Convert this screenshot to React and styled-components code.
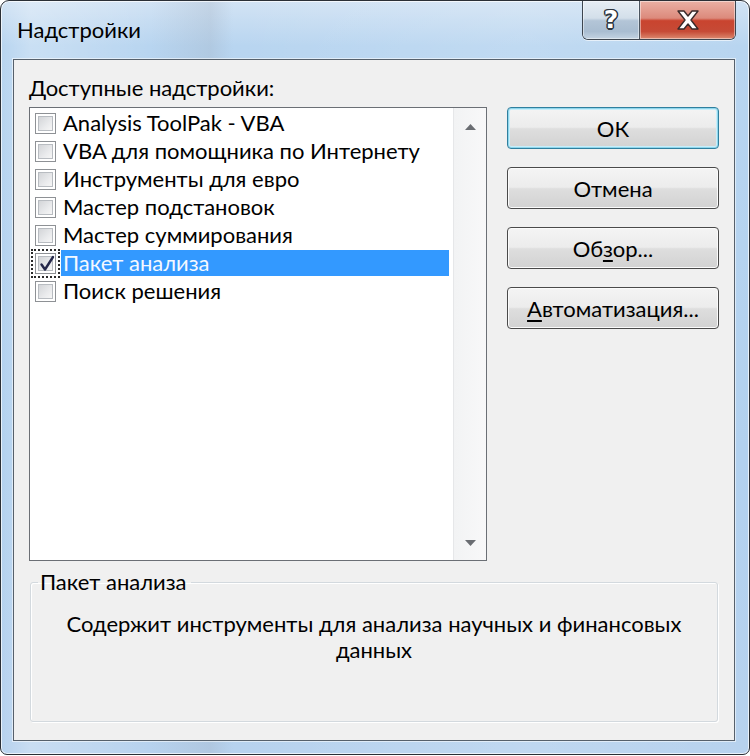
import React from "react";
import styled, { createGlobalStyle } from "styled-components";

const GlobalStyle = createGlobalStyle`
  html, body {
    margin: 0;
    padding: 0;
    background: #ffffff;
  }
  body {
    font-family: Lato, "Noto Sans", "Liberation Sans", sans-serif;
  }
`;

const addins = [
  { name: "Analysis ToolPak - VBA" },
  { name: "VBA для помощника по Интернету" },
  { name: "Инструменты для евро" },
  { name: "Мастер подстановок" },
  { name: "Мастер суммирования" },
  { name: "Пакет анализа", checked: true, selected: true },
  { name: "Поиск решения" },
];

const Window = styled.div`
  width: 750px;
  height: 755px;
  box-sizing: border-box;
  display: flex;
  flex-direction: column;
  padding: 0 14px 13px 12px;
  border: 1px solid #2a2f36;
  border-radius: 9px 9px 7px 7px;
  background: linear-gradient(
      90deg,
      rgba(255, 255, 255, 0) 0%,
      rgba(255, 255, 255, 0.25) 4%,
      rgba(255, 255, 255, 0) 20%,
      rgba(150, 160, 175, 0.22) 28%,
      rgba(255, 255, 255, 0) 31%,
      rgba(255, 255, 255, 0.12) 70%,
      rgba(255, 255, 255, 0) 100%
    ),
    linear-gradient(180deg, #d2e3f4 0%, #b8d5f0 6%, #b2d1ef 60%, #b7d2ee 100%);
  box-shadow: inset 0 0 0 1px rgba(255, 255, 255, 0.7);
`;

const TitleBar = styled.div`
  flex: none;
  height: 58px;
  display: flex;
  justify-content: space-between;
  align-items: flex-start;
`;

const Title = styled.div`
  padding: 16px 0 0 4px;
  font-size: 22px;
  line-height: 26px;
  color: #000;
`;

const CaptionGroup = styled.div`
  display: flex;
  height: 38px;
  margin-right: -1px;
  border: 1px solid #3e4650;
  border-top: none;
  border-radius: 0 0 6px 6px;
  overflow: hidden;
  box-shadow: 0 1px 0 rgba(255, 255, 255, 0.6);
`;

const CaptionButton = styled.div`
  width: ${(p) => p.$w}px;
  display: flex;
  align-items: center;
  justify-content: center;
  box-shadow: inset 0 0 0 1px rgba(255, 255, 255, 0.45);
  background: ${(p) =>
    p.$close
      ? "linear-gradient(180deg, #eab0a4 0%, #dc8a7c 45%, #c9442f 52%, #c64a36 80%, #dc8a70 100%)"
      : "linear-gradient(180deg, #e6edf4 0%, #d3dfea 45%, #b3c5d7 52%, #a9bdd1 80%, #c3d3e2 100%)"};
  & + & {
    border-left: 1px solid #4b5560;
  }
`;

const HelpGlyph = styled.span`
  font-family: "DejaVu Sans", sans-serif;
  font-weight: bold;
  font-size: 25px;
  line-height: 1;
  color: #ffffff;
  margin-top: -1px;
  text-shadow: -1.5px 0 0 #2d3640, 1.5px 0 0 #2d3640, 0 -1.5px 0 #2d3640,
    0 1.5px 0 #2d3640, -1px -1px 0 #2d3640, 1px -1px 0 #2d3640,
    -1px 1px 0 #2d3640, 1px 1px 0 #2d3640;
`;

const Client = styled.div`
  flex: 1;
  display: flex;
  flex-direction: column;
  padding: 16px 15px 17px 15px;
  border: 1px solid #56606b;
  background: #f0f0f0;
  box-shadow: 0 0 0 1px rgba(255, 255, 255, 0.55);
`;

const TopArea = styled.div`
  display: grid;
  grid-template-columns: 458px 212px;
  grid-template-rows: 24px 454px;
  grid-template-areas:
    "label ."
    "list buttons";
  column-gap: 20px;
  row-gap: 7px;
`;

const FieldLabel = styled.div`
  grid-area: label;
  font-size: 22px;
  line-height: 24px;
  color: #000;
  white-space: nowrap;
`;

const Accel = styled.u`
  text-decoration-thickness: 2px;
  text-underline-offset: 3px;
`;

const ListBox = styled.div`
  grid-area: list;
  display: flex;
  border: 1px solid #6b6f75;
  background: #ffffff;
`;

const Items = styled.div`
  flex: 1;
  padding: 1px 0 0 5px;
`;

const Row = styled.div`
  height: 28px;
  display: flex;
  align-items: center;
`;

const Box = styled.span`
  flex: none;
  width: 21px;
  height: 21px;
  box-sizing: border-box;
  border: 1px solid #8e9195;
  background: #ffffff;
  padding: 2px;
  position: relative;
  outline: ${(p) => (p.$focus ? "2px dotted #2a2a2a" : "none")};
  outline-offset: 2px;
  &::before {
    content: "";
    display: block;
    width: 100%;
    height: 100%;
    box-sizing: border-box;
    border: 1px solid #b8bcc1;
    background: linear-gradient(135deg, #d3d5d8 0%, #e9eaec 60%, #f6f6f6 100%);
  }
  svg {
    position: absolute;
    left: 1px;
    top: 0;
  }
`;

const ItemText = styled.span`
  flex: 1;
  margin: 0 4px 0 5px;
  padding-left: 2px;
  height: 26px;
  font-size: 22px;
  line-height: 26px;
  white-space: nowrap;
  color: ${(p) => (p.$selected ? "#f4f8ff" : "#000")};
  background: ${(p) => (p.$selected ? "#3399ff" : "transparent")};
`;

const ScrollBar = styled.div`
  flex: none;
  width: 33px;
  display: flex;
  flex-direction: column;
  justify-content: space-between;
  align-items: center;
  padding: 16px 0 14px;
  box-sizing: border-box;
  border-left: 1px solid #e6e7e9;
  background: linear-gradient(90deg, #f2f3f4 0%, #f8f8f9 100%);
`;

const Buttons = styled.div`
  grid-area: buttons;
  display: flex;
  flex-direction: column;
  gap: 18px;
`;

const Button = styled.button`
  height: 42px;
  width: 100%;
  box-sizing: border-box;
  border: 1px solid ${(p) => (p.$default ? "#2f7f9e" : "#4a4a4a")};
  border-radius: 4px;
  font-family: Lato, "Noto Sans", "Liberation Sans", sans-serif;
  font-size: 22px;
  color: #000;
  padding: 0;
  background: linear-gradient(
    180deg,
    #f4f4f4 0%,
    #ececec 48%,
    #dedede 52%,
    #d2d2d2 100%
  );
  box-shadow: ${(p) =>
    p.$default
      ? "inset 0 0 0 1px #8fd6ec, inset 0 0 0 2px #c8eefa"
      : "inset 0 0 0 1px #fbfbfb"};
`;

const GroupBox = styled.fieldset`
  flex: none;
  height: 152px;
  box-sizing: border-box;
  margin: 9px 1px 0 1px;
  padding: 17px 6px 0;
  border: 1px solid #d3d9de;
  border-radius: 3px;
  box-shadow: inset 1px 1px 0 #ffffff, 1px 1px 0 #ffffff;
`;

const Legend = styled.legend`
  margin-left: 1px;
  padding: 0 4px 0 2px;
  font-size: 22px;
  line-height: 24px;
  color: #000;
`;

const Description = styled.p`
  margin: 0;
  padding: 0 18px;
  font-size: 22px;
  line-height: 26px;
  text-align: center;
  color: #000;
`;

const Check = () => (
  <svg width="20" height="20" viewBox="0 0 20 20">
    <path
      d="M4.5 10.5 L8 15.5 L16 3"
      fill="none"
      stroke="#25284a"
      strokeWidth="2.4"
      strokeLinecap="round"
      strokeLinejoin="round"
    />
  </svg>
);

const Arrow = ({ down }) => (
  <svg width="11" height="6" viewBox="0 0 11 6">
    <path d={down ? "M0 0 H11 L5.5 6 Z" : "M0 6 H11 L5.5 0 Z"} fill="#6a6d72" />
  </svg>
);

const CloseGlyph = () => (
  <svg width="26" height="22" viewBox="0 0 26 22">
    <path
      d="M3 2 H9 L13 7 L17 2 H23 L16 11 L23 20 H17 L13 15 L9 20 H3 L10 11 Z"
      fill="#ffffff"
      stroke="#3a2a2a"
      strokeWidth="1.4"
      strokeLinejoin="round"
    />
  </svg>
);

const App = () => {
  return (
    <>
      <GlobalStyle />
      <Window>
        <TitleBar>
          <Title>Надстройки</Title>
          <CaptionGroup>
            <CaptionButton $w={56}>
              <HelpGlyph>?</HelpGlyph>
            </CaptionButton>
            <CaptionButton $w={95} $close>
              <CloseGlyph />
            </CaptionButton>
          </CaptionGroup>
        </TitleBar>
        <Client>
          <TopArea>
            <FieldLabel>
              <Accel>Д</Accel>оступные надстройки:
            </FieldLabel>
            <ListBox>
              <Items>
                {addins.map((item) => (
                  <Row key={item.name}>
                    <Box $focus={item.selected}>{item.checked && <Check />}</Box>
                    <ItemText $selected={item.selected}>{item.name}</ItemText>
                  </Row>
                ))}
              </Items>
              <ScrollBar>
                <Arrow />
                <Arrow down />
              </ScrollBar>
            </ListBox>
            <Buttons>
              <Button $default>ОК</Button>
              <Button>Отмена</Button>
              <Button>
                Об<Accel>з</Accel>ор...
              </Button>
              <Button>
                <Accel>А</Accel>втоматизация...
              </Button>
            </Buttons>
          </TopArea>
          <GroupBox>
            <Legend>Пакет анализа</Legend>
            <Description>
              Содержит инструменты для анализа научных и финансовых данных
            </Description>
          </GroupBox>
        </Client>
      </Window>
    </>
  );
};

export default App;
